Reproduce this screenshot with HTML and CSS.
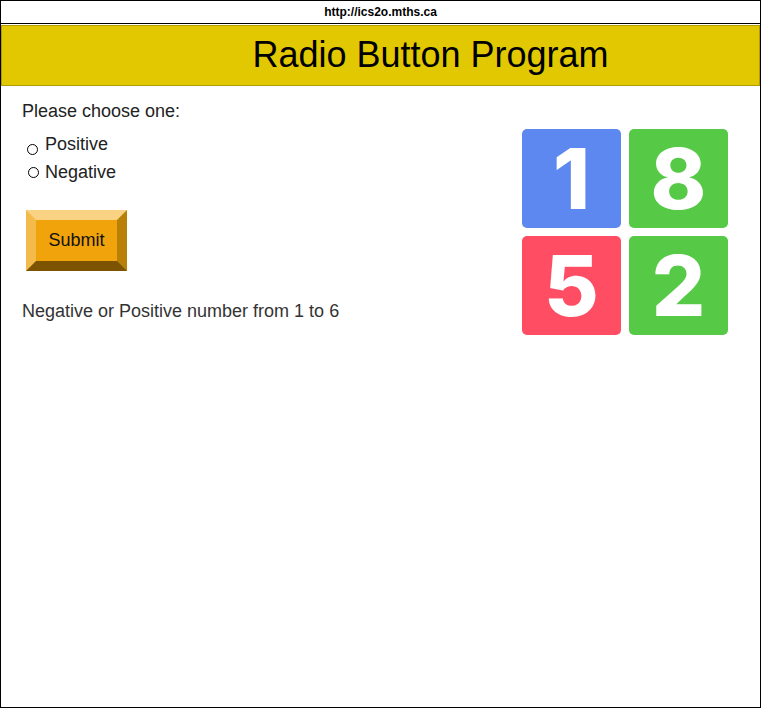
FILE: index.html
```html
<!DOCTYPE html>
<html lang="en">
<head>
<meta charset="utf-8">
<title>Radio Button Program</title>
<link rel="stylesheet" href="styles.css">
</head>
<body>
<div class="frame">
  <div class="urlbar">http://ics2o.mths.ca</div>
  <header class="banner"><h1 class="title">Radio Button Program</h1></header>
  <main class="content">
    <section class="form">
      <p class="prompt">Please choose one:</p>
      <label class="option option-first"><input class="radio" type="radio" name="sign" value="positive"><span>Positive</span></label>
      <label class="option option-second"><input class="radio" type="radio" name="sign" value="negative"><span>Negative</span></label>
      <button class="submit" type="button">Submit</button>
      <p class="result">Negative or Positive number from 1 to 6</p>
    </section>
    <div class="dice">
      <div class="tile tile-blue">1</div>
      <div class="tile tile-green">8</div>
      <div class="tile tile-red">5</div>
      <div class="tile tile-green">2</div>
    </div>
  </main>
</div>
</body>
</html>
```

FILE: styles.css
```css
html, body {
  margin: 0;
  padding: 0;
  background: #ffffff;
}

.frame {
  box-sizing: border-box;
  width: 761px;
  height: 708px;
  border: 1px solid #000000;
  font-family: "Liberation Sans", Arial, sans-serif;
  color: #222222;
}

.urlbar {
  height: 22px;
  line-height: 22px;
  text-align: center;
  font-size: 12px;
  font-weight: bold;
  color: #000000;
  border-bottom: 1px solid #000000;
  margin-bottom: 1px;
}

.banner {
  background: #e2c800;
  border: 1px solid #b29c00;
  height: 59px;
  display: flex;
  align-items: center;
  justify-content: center;
  padding-left: 100px;
}

.title {
  margin: 0;
  font-size: 36px;
  font-weight: normal;
  color: #000000;
  line-height: 1;
  padding-bottom: 2px;
}

.content {
  display: flex;
  justify-content: space-between;
  align-items: flex-start;
  padding: 15px 32px 0 21px;
}

.form {
  display: flex;
  flex-direction: column;
  align-items: flex-start;
}

.prompt {
  margin: 0 0 12px 0;
  font-size: 18px;
  line-height: 21px;
}

.option {
  display: block;
  font-size: 18px;
  line-height: 21px;
  height: 28px;
}

.radio {
  -webkit-appearance: none;
  appearance: none;
  display: inline-block;
  box-sizing: border-box;
  width: 11px;
  height: 11px;
  border: 1.5px solid #000000;
  border-radius: 50%;
  background: #ffffff;
  margin: 0;
}

.option-first .radio {
  margin: 0 7px 0 5px;
  vertical-align: -5px;
}

.option-second .radio {
  margin: 0 6px 0 6px;
  vertical-align: 0px;
}

.submit {
  margin-top: 20px;
  box-sizing: border-box;
  width: 101px;
  height: 61px;
  margin-left: 4px;
  border-style: solid;
  border-width: 10px;
  border-color: #f9d383 #b98008 #7c5300 #f3ba4c;
  background: #f0a30b;
  font-family: "Liberation Sans", Arial, sans-serif;
  font-size: 18px;
  color: #111111;
  padding: 0;
}

.result {
  margin: 30px 0 0 0;
  font-size: 18px;
  line-height: 21px;
  color: #333333;
}

.dice {
  margin-top: 28px;
  display: grid;
  grid-template-columns: 99px 99px;
  grid-auto-rows: 99px;
  gap: 8px;
}

.tile {
  border-radius: 5px;
  display: flex;
  align-items: center;
  justify-content: center;
  color: #ffffff;
  font-family: Inter, "Open Sans", sans-serif;
  font-weight: 800;
  font-size: 84px;
  line-height: 1;
}

.tile-blue { background: #5c88f0; }
.tile-green { background: #56c946; }
.tile-red { background: #ff4e63; }
```
